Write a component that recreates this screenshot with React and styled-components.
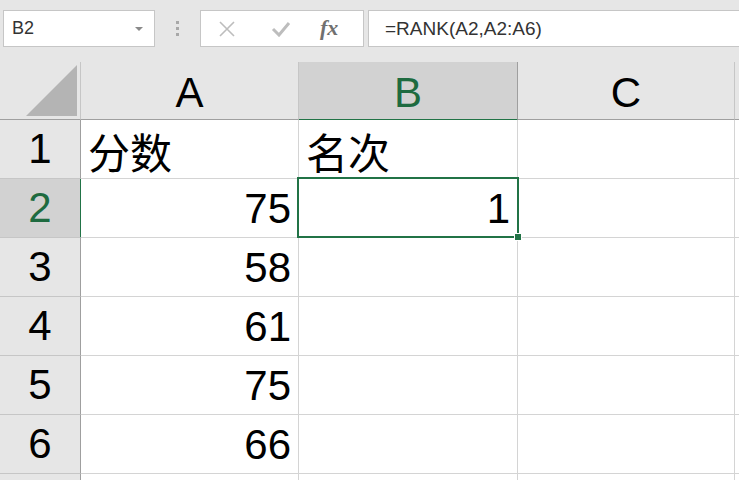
import React from "react";
import styled, { createGlobalStyle } from "styled-components";

const GlobalStyle = createGlobalStyle`
  html, body {
    margin: 0;
    padding: 0;
    background: #e6e6e6;
    overflow: hidden;
  }
  body {
    font-family: "Liberation Sans", "Noto Sans CJK SC", sans-serif;
  }
`;

const Page = styled.div`
  width: 739px;
  height: 480px;
  overflow: hidden;
  background: #e6e6e6;
`;

const Toolbar = styled.div`
  height: 62px;
  display: flex;
  align-items: flex-start;
  padding-top: 10px;
  box-sizing: border-box;
`;

const NameBox = styled.div`
  margin-left: 3px;
  width: 152px;
  height: 37px;
  box-sizing: border-box;
  background: #fff;
  border: 1px solid #c6c6c6;
  display: flex;
  align-items: center;
  justify-content: space-between;
  padding: 0 11px 0 8px;
  font-size: 18px;
  color: #333;
`;

const Caret = styled.span`
  width: 0;
  height: 0;
  border-left: 4px solid transparent;
  border-right: 4px solid transparent;
  border-top: 4px solid #8a8a8a;
`;

const Grip = styled.div`
  width: 45px;
  height: 37px;
  display: flex;
  flex-direction: column;
  align-items: center;
  justify-content: center;
  gap: 3px;
`;

const Dot = styled.span`
  width: 3px;
  height: 3px;
  background: #a8a8a8;
`;

const ActionBox = styled.div`
  width: 164px;
  height: 37px;
  box-sizing: border-box;
  background: #fff;
  border: 1px solid #c6c6c6;
  display: flex;
  align-items: center;
  padding-left: 16px;
  gap: 34px;
`;

const Fx = styled.span`
  font-family: "Liberation Serif", serif;
  font-style: italic;
  font-weight: bold;
  font-size: 22px;
  color: #707070;
  margin-left: -5px;
  margin-top: -2px;
`;

const FormulaBox = styled.div`
  margin-left: 4px;
  flex: 1;
  height: 37px;
  box-sizing: border-box;
  background: #fff;
  border: 1px solid #c6c6c6;
  border-right: none;
  display: flex;
  align-items: center;
  padding-left: 16px;
  font-size: 19px;
  color: #333;
`;

const Sheet = styled.div`
  display: grid;
  grid-template-columns: 81px 218px 219px 217px 40px;
  grid-template-rows: 58px repeat(7, 59px);
`;

const Corner = styled.div`
  box-sizing: border-box;
  border-right: 1px solid #c6c6c6;
  border-bottom: 1px solid #9f9f9f;
  display: flex;
  align-items: flex-end;
  justify-content: flex-end;
  padding: 0 3px 3px 0;
`;

const ColHead = styled.div`
  box-sizing: border-box;
  background: ${(p) => (p.$active ? "#d2d2d2" : "#e6e6e6")};
  border-right: 1px solid ${(p) => (p.$active ? "#9f9f9f" : "#c6c6c6")};
  border-bottom: ${(p) => (p.$active ? "2px solid #217346" : "1px solid #9f9f9f")};
  margin-bottom: ${(p) => (p.$active ? "-1px" : "0")};
  display: flex;
  align-items: center;
  justify-content: center;
  padding-top: 4px;
  font-size: 42px;
  color: ${(p) => (p.$active ? "#1e6b40" : "#000")};
`;

const RowHead = styled.div`
  box-sizing: border-box;
  background: ${(p) => (p.$active ? "#d2d2d2" : "#e6e6e6")};
  border-right: ${(p) => (p.$active ? "2px solid #217346" : "1px solid #9f9f9f")};
  margin-right: ${(p) => (p.$active ? "-1px" : "0")};
  border-bottom: 1px solid #c6c6c6;
  display: flex;
  align-items: center;
  justify-content: center;
  font-size: 42px;
  color: ${(p) => (p.$active ? "#1e6b40" : "#000")};
`;

const Cell = styled.div`
  position: relative;
  box-sizing: border-box;
  background: #fff;
  border-right: 1px solid #d4d4d4;
  border-bottom: 1px solid #d4d4d4;
  display: flex;
  align-items: center;
  justify-content: ${(p) => (p.$num ? "flex-end" : "flex-start")};
  padding: 2px 7px 0 7px;
  font-size: 42px;
  color: #000;
  white-space: nowrap;
  z-index: ${(p) => (p.$active ? 2 : "auto")};
`;

const Selection = styled.div`
  position: absolute;
  left: -2px;
  top: -2px;
  right: -2px;
  bottom: -1px;
  border: 2px solid #217346;
  pointer-events: none;
`;

const Handle = styled.span`
  position: absolute;
  right: -5px;
  bottom: -5px;
  width: 6px;
  height: 6px;
  background: #217346;
  border: 1px solid #fff;
`;

const cols = ["A", "B", "C", ""];
const rows = [
  ["分数", "名次", "", ""],
  ["75", "1", "", ""],
  ["58", "", "", ""],
  ["61", "", "", ""],
  ["75", "", "", ""],
  ["66", "", "", ""],
  ["", "", "", ""],
];

function XIcon() {
  return (
    <svg width="20" height="16" viewBox="0 0 20 16">
      <path d="M3 1 L17 15 M17 1 L3 15" stroke="#bdbdbd" strokeWidth="1.6" fill="none" />
    </svg>
  );
}

function CheckIcon() {
  return (
    <svg width="20" height="16" viewBox="0 0 20 16">
      <path d="M2 8 L8 14 L18 2" stroke="#bdbdbd" strokeWidth="3" fill="none" />
    </svg>
  );
}

export default function App() {
  return (
    <Page>
      <GlobalStyle />
      <Toolbar>
        <NameBox>
          B2
          <Caret />
        </NameBox>
        <Grip>
          <Dot />
          <Dot />
          <Dot />
        </Grip>
        <ActionBox>
          <XIcon />
          <CheckIcon />
          <Fx>fx</Fx>
        </ActionBox>
        <FormulaBox>=RANK(A2,A2:A6)</FormulaBox>
      </Toolbar>
      <Sheet>
        <Corner>
          <svg width="51" height="51" viewBox="0 0 51 51">
            <polygon points="51,0 51,51 0,51" fill="#b4b4b4" />
          </svg>
        </Corner>
        {cols.map((c) => (
          <ColHead key={c || "d"} $active={c === "B"}>
            {c}
          </ColHead>
        ))}
        {rows.map((r, i) => (
          <React.Fragment key={i}>
            <RowHead $active={i === 1}>{i < 6 ? i + 1 : ""}</RowHead>
            {r.map((v, j) => {
              const active = i === 1 && j === 1;
              return (
                <Cell key={j} $num={/^\d+$/.test(v)} $active={active}>
                  {v}
                  {active && (
                    <Selection>
                      <Handle />
                    </Selection>
                  )}
                </Cell>
              );
            })}
          </React.Fragment>
        ))}
      </Sheet>
    </Page>
  );
}
